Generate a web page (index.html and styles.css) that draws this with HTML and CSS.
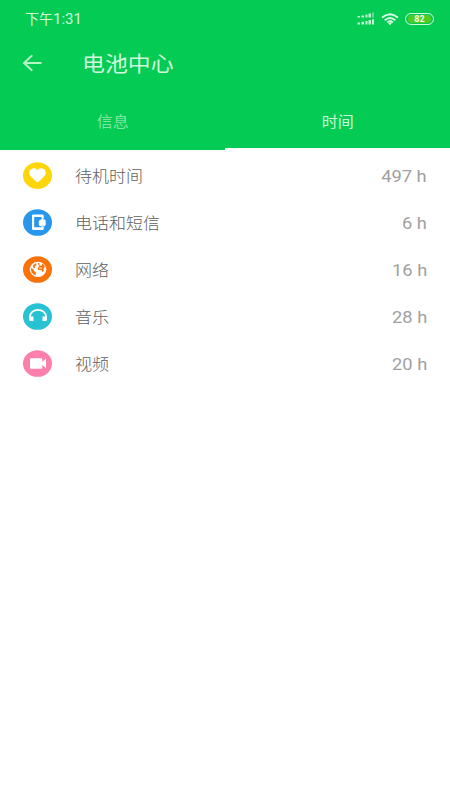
FILE: index.html
```html
<!DOCTYPE html>
<html lang="zh-CN">
<head>
<meta charset="utf-8">
<title>电池中心</title>
<link rel="stylesheet" href="styles.css">
</head>
<body>
<header class="header">
  <div class="status">
    <span class="clock">下午<span class="digits">1:31</span></span>
    <div class="indicators">
      <svg class="signal" width="18" height="14" viewBox="0 0 18 14" fill="#fff"><g opacity=".75"><path d="M.5 4h2.500v1.500H.5zM4.500 3.500H7v2H4.500zM8.500 2.500h2v3h-2zM11.500 1.500H14v4h-2.500z"/><path opacity=".5" d="M15 .5h2v5h-2z"/><path d="M.5 10.500h2.500v2H.5zM4.500 9.800H7v2.700H4.500zM8.500 9h2v3.500h-2zM11.500 8H14v4.500h-2.500zM15 7.200h2v5.300h-2z"/></g></svg>
      <svg class="wifi" width="18" height="13" viewBox="0 0 18 13" fill="none" stroke="#dcffe5" stroke-width="1.900"><path d="M1 4.600Q9-2.200 17 4.600M3.700 7.200Q9 2.700 14.300 7.200M6.200 9.500Q9 7.100 11.800 9.500"/><path d="M7.200 10.200Q9 9 10.800 10.200L9 12.300z" fill="#dcffe5" stroke="none"/></svg>
      <span class="battery"><span class="charge">82</span></span>
    </div>
  </div>
  <div class="titlebar">
    <svg class="back" width="20" height="18" viewBox="0 0 20 18" fill="none" stroke="#b5f5c6" stroke-width="1.900"><path d="M19.500 9H2M10.300 1.300 2 9l8.300 7.700"/></svg>
    <h1 class="title wide">电池中心</h1>
  </div>
  <nav class="tabs">
    <div class="tab"><span class="label">信息</span></div>
    <div class="tab active"><span class="label">时间</span></div>
  </nav>
</header>
<main class="list">
  <div class="row">
    <svg class="icon" viewBox="0 0 29 27"><ellipse cx="14.500" cy="13.500" rx="14.500" ry="13.300" fill="#fdd50b"/><path fill="#fff" d="M14.500 20.400C9.500 16.300 6.300 13.700 6.300 10.700c0-4.500 5.600-5.900 8.200-2.500 2.600-3.400 8.200-2 8.200 2.500 0 3-3.200 5.600-8.200 9.700z"/></svg>
    <span class="name wide">待机时间</span><span class="value wide">497 h</span>
  </div>
  <div class="row">
    <svg class="icon" viewBox="0 0 29 27"><ellipse cx="14.500" cy="13.500" rx="14.500" ry="13.300" fill="#2796ed"/><path fill="#fff" fill-rule="evenodd" d="M10.200 5.500h9.300q1.200 0 1.200 1.200v3.100h-2.100V8h-7.400v10.300h7.400v-1.600h2.100v3.100q0 1.200-1.200 1.200h-9.300Q9 21 9 19.800V6.700q0-1.200 1.200-1.200zM17 11l2.500-1.300 1.200.8h1l1 1v4.200l-1.200 1.600H17l-1.200-1.300v-4z"/></svg>
    <span class="name wide">电话和短信</span><span class="value wide">6 h</span>
  </div>
  <div class="row">
    <svg class="icon" viewBox="0 0 29 27"><ellipse cx="14.500" cy="13.500" rx="14.500" ry="13.300" fill="#f9720a"/><ellipse cx="15" cy="13.300" rx="8.300" ry="7.600" fill="#fff"/><path fill="#f9720a" d="m8 12 2.700 1.600.3 1.500 1.800 1.200v2.900q-4.500-1-4.800-5.800zM10 9.200l2.200-1.800 1.300.4-.3 1.700-1.700.6 1 1.400-2 1zM15 7h1.500v2.500l2.300.3.300-2.300q2.600 1.200 2.900 4l-1.300.2v3.200l-1.200 1.300-1-2.200h-3.200l-.8-1.800 1.500-1.500z"/><path fill="#fff" d="M16 11.600h3v1h-3z"/></svg>
    <span class="name wide">网络</span><span class="value wide">16 h</span>
  </div>
  <div class="row">
    <svg class="icon" viewBox="0 0 29 27"><ellipse cx="14.500" cy="13.500" rx="14.500" ry="13.300" fill="#29c2d3"/><path d="M7 16v-2.200c0-9.200 16-9.200 16 0V16" fill="none" stroke="#fff" stroke-width="1.800"/><path fill="#fff" d="M6 13.400h4.500V18H7.800Q6 18 6 16.400zM19.500 13.400H24v3Q24 18 22.200 18h-2.700z"/></svg>
    <span class="name wide">音乐</span><span class="value wide">28 h</span>
  </div>
  <div class="row">
    <svg class="icon" viewBox="0 0 29 27"><ellipse cx="14.500" cy="13.500" rx="14.500" ry="13.300" fill="#fc80ab"/><path fill="#fff" d="M8 8.200h10.300q1 0 1 1v2.900l3.700-3.500v9.700l-3.700-3.500v2.900q0 1-1 1H8q-1 0-1-1V9.200q0-1 1-1z"/></svg>
    <span class="name wide">视频</span><span class="value wide">20 h</span>
  </div>
</main>
</body>
</html>
```
FILE: styles.css
```css
* { box-sizing: border-box; }
body {
  margin: 0;
  min-height: 800px;
  background: #fff;
  font-family: Roboto, "Noto Sans CJK SC", sans-serif;
}
.wide {
  transform: scaleX(1.09);
  transform-origin: left center;
  white-space: nowrap;
}
.header {
  height: 150px;
  background: #04cb54;
  display: flex;
  flex-direction: column;
}
.status {
  height: 38px;
  padding: 0 16px 0 25px;
  display: flex;
  align-items: center;
  justify-content: space-between;
}
.clock { font-size: 14px; color: #d0fadb; line-height: 20px; }
.digits { font-size: 15px; }
.indicators { display: flex; align-items: center; }
.wifi { margin: 0 6px 0 6px; }
.battery {
  width: 29px;
  height: 12px;
  padding: 1px 2px;
  border: 1px solid #d2fbdc;
  border-radius: 6px;
  display: flex;
}
.charge {
  flex: 1;
  border-radius: 4px;
  background: #50cb20;
  color: #f0fff0;
  font-size: 9px;
  font-weight: 700;
  line-height: 8px;
  text-align: center;
}
.titlebar { height: 50px; padding-left: 22px; display: flex; align-items: center; }
.title { margin: 2px 0 0 40px; font-size: 21px; font-weight: 400; line-height: 30px; color: #d0fadb; }
.tabs { flex: 1; display: flex; }
.tab {
  flex: 1;
  height: 62px;
  padding-top: 2px;
  display: flex;
  align-items: center;
  justify-content: center;
  font-size: 14.700px;
  color: #7fe6a2;
}
.active { color: #c9f9d6; border-bottom: 2px solid #fff; padding-top: 4px; }
.label { transform: scaleX(1.09); }
.list { padding-top: 2.500px; }
.row {
  height: 46.800px;
  padding: 0 23px;
  display: flex;
  align-items: center;
}
.icon { width: 29px; height: 27px; flex: none; }
.name { margin: -1px 0 0 23px; font-size: 15.600px; font-weight: 300; color: #606060; }
.value { margin: 1px 0 0 auto; font-size: 16.800px; color: #a0a0a0; transform-origin: right center; }
```
